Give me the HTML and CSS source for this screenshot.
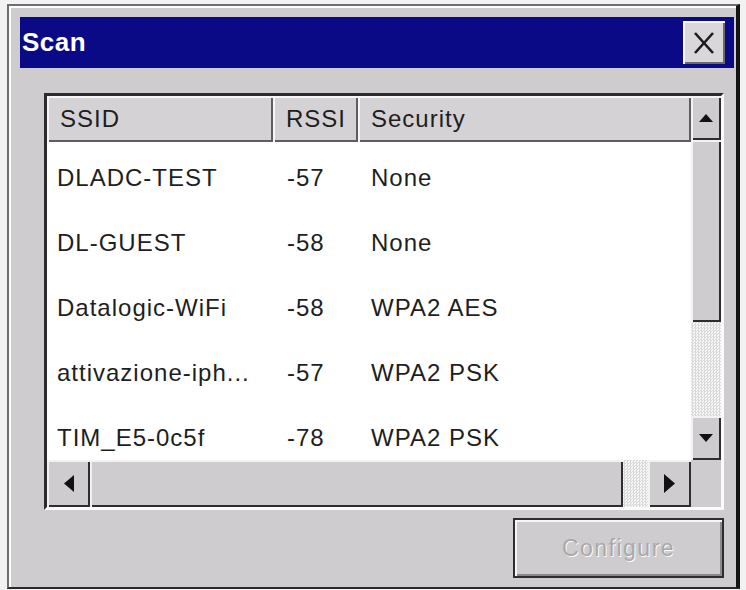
FILE: index.html
```html
<!DOCTYPE html>
<html lang="en">
<head>
    <meta charset="UTF-8">
    <title>Scan</title>
    <link rel="stylesheet" href="styles.css">
</head>
<body>
    <div class="window">
        <div class="titlebar">
            <span class="title">Scan</span>
            <button class="close-btn" title="Close">
                <svg width="20" height="22" viewBox="0 0 20 22">
                    <path d="M1 1 L19 21 M19 1 L1 21" stroke="#1c1c1c" stroke-width="2.6" fill="none"/>
                </svg>
            </button>
        </div>

        <div class="listview">
            <div class="lv-content">
                <div class="lv-header">
                    <div class="hcell col-ssid">SSID</div>
                    <div class="hcell col-rssi">RSSI</div>
                    <div class="hcell col-sec">Security</div>
                </div>
                <div class="lv-rows">
                    <div class="row"><span class="col-ssid">DLADC-TEST</span><span class="col-rssi">-57</span><span class="col-sec">None</span></div>
                    <div class="row"><span class="col-ssid">DL-GUEST</span><span class="col-rssi">-58</span><span class="col-sec">None</span></div>
                    <div class="row"><span class="col-ssid">Datalogic-WiFi</span><span class="col-rssi">-58</span><span class="col-sec">WPA2 AES</span></div>
                    <div class="row"><span class="col-ssid">attivazione-iph...</span><span class="col-rssi">-57</span><span class="col-sec">WPA2 PSK</span></div>
                    <div class="row"><span class="col-ssid">TIM_E5-0c5f</span><span class="col-rssi">-78</span><span class="col-sec">WPA2 PSK</span></div>
                </div>
            </div>

            <div class="vscroll">
                <div class="sb-btn v-btn">
                    <svg width="14" height="8" viewBox="0 0 14 8"><polygon points="7,0 14,8 0,8" fill="#111"/></svg>
                </div>
                <div class="sb-thumb v-thumb"></div>
                <div class="sb-track v-track"></div>
                <div class="sb-btn v-btn">
                    <svg width="14" height="8" viewBox="0 0 14 8"><polygon points="0,0 14,0 7,8" fill="#111"/></svg>
                </div>
            </div>

            <div class="hscroll">
                <div class="sb-btn h-btn">
                    <svg width="10" height="17" viewBox="0 0 10 17"><polygon points="10,0 10,17 0,8.5" fill="#111"/></svg>
                </div>
                <div class="sb-thumb h-thumb"></div>
                <div class="sb-track h-track"></div>
                <div class="sb-btn h-btn">
                    <svg width="11" height="19" viewBox="0 0 11 19"><polygon points="0,0 11,9.5 0,19" fill="#111"/></svg>
                </div>
            </div>

            <div class="sb-corner"></div>
        </div>

        <div class="actions">
            <button class="btn" disabled>Configure</button>
        </div>
    </div>
</body>
</html>
```

FILE: styles.css
```css
body { margin: 0; background: #f2f2f2; font-family: "Liberation Sans", Arial, sans-serif; color: #1e1e1e; }

/* dialog frame */
.window { box-sizing: border-box; width: 733px; height: 585px; margin: 4px 0 0 7px; background: #cfcccf;
  border-left: 2px solid #6e6e6e; border-top: 2px solid #6e6e6e; border-right: 4px solid #141414; border-bottom: 2px solid #2a2a2a;
  box-shadow: inset 2px 2px 0 #fdfdfd; padding: 11px 2px 0 11px; }

.titlebar { height: 51px; width: 714px; background: #0a0a86; display: flex; align-items: center; justify-content: space-between; padding: 0 9px 0 2px; box-sizing: border-box; }
.title { color: #fff; font-weight: bold; font-size: 26px; letter-spacing: 0.5px; }
.close-btn { width: 42px; height: 43px; padding: 0; border: none; background: #d9d7d9; display: flex; align-items: center; justify-content: center;
  box-shadow: inset 2px 2px 0 #fbfbfb, inset -2px -2px 0 #6a6a6a; }

/* list view */
.listview { box-sizing: border-box; width: 680px; height: 417px; margin: 25px 0 0 24px; background: #fff;
  border-top: 3px solid #2c2c2c; border-left: 3px solid #2c2c2c; border-right: 3px solid #fbfbfb; border-bottom: 3px solid #fbfbfb;
  display: grid; grid-template-columns: 644px 30px; grid-template-rows: 364px 47px; }

.lv-content { overflow: hidden; background: #fff; }
.lv-header { display: flex; height: 46px; }
.hcell { box-sizing: border-box; height: 46px; display: flex; align-items: center; padding-left: 13px; font-size: 24px; letter-spacing: 1px; background: #d5d2d5;
  box-shadow: inset 2px 2px 0 #f6f6f6, inset -2px -2px 0 #5e5e5e; }
.hcell.col-ssid { padding-left: 13px; }

.col-ssid { width: 226px; flex: none; box-sizing: border-box; }
.col-rssi { width: 85px; flex: none; box-sizing: border-box; }
.col-sec { flex: 1; box-sizing: border-box; }

.lv-rows { padding-top: 3px; }
.row { display: flex; align-items: center; height: 65px; font-size: 24px; letter-spacing: 1px; }
.row .col-ssid { padding-left: 10px; white-space: nowrap; }
.row .col-rssi { padding-left: 14px; }
.row .col-sec { padding-left: 13px; }

/* scroll bars */
.sb-btn, .sb-thumb { background: #cfcccf; box-shadow: inset 2px 2px 0 #f2f2f2, inset -2px -2px 0 #2e2e2e; display: flex; align-items: center; justify-content: center; box-sizing: border-box; }
.sb-track { background: repeating-conic-gradient(#d9d9d9 0 25%, #f7f7f7 0 50%) 0 0 / 3px 3px; }

.vscroll { display: flex; flex-direction: column; }
.v-btn { height: 44px; }
.v-thumb { height: 182px; }
.v-track { flex: 1; }

.hscroll { display: flex; }
.h-btn { width: 43px; }
.h-thumb { width: 533px; }
.h-track { flex: 1; }

.sb-corner { background: #cfcccf; }

/* bottom button row */
.actions { display: flex; justify-content: flex-end; padding: 8px 10px 0 0; }
.btn { width: 211px; height: 60px; background: #cfcccf; border: 2px solid #2e2e2e; box-shadow: inset 2px 2px 0 #f6f6f6, inset -2px -2px 0 #8a8a8a;
  font-family: "Liberation Sans", Arial, sans-serif; font-size: 23px; letter-spacing: 1.5px; color: #aaa8aa; text-shadow: 1px 1px 0 #fafafa; }
```
